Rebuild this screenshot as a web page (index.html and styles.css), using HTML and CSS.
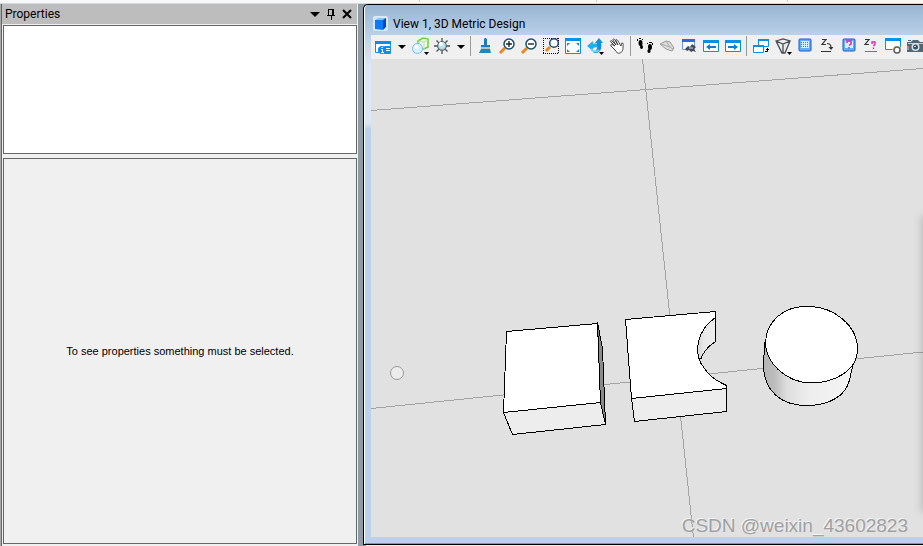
FILE: index.html
```html
<!DOCTYPE html>
<html lang="en">
<head>
<meta charset="utf-8">
<title>View 1, 3D Metric Design</title>
<link rel="stylesheet" href="styles.css">
</head>
<body>
<div class="ribbon"><i></i><i></i><i></i></div>
<main class="workspace">
  <aside class="panel">
    <header class="panel-head">
      <h2>Properties</h2>
      <button class="pin" aria-label="Menu"><svg width="16" height="16"><path d="M3 6h10l-5 5z"/></svg></button>
      <button class="pin" aria-label="Pin"><svg width="16" height="16" shape-rendering="crispEdges"><path d="M5 3h6v6h1v1H9v4H8v-4H4V9h1zM6 4v5h3V4z" fill-rule="evenodd"/></svg></button>
      <button class="pin" aria-label="Close"><svg width="16" height="16"><path d="M4 4l8 8M12 4l-8 8" stroke="#000" stroke-width="2"/></svg></button>
    </header>
    <div class="tree"></div>
    <div class="details"><p>To see properties something must be selected.</p></div>
  </aside>
  <section class="window">
    <header class="title">
      <svg width="16" height="16" viewBox="0 0 16 16"><rect width="15" height="15" rx="2" fill="#d9e8f6"/><path d="M2 4l3-2h8l-2 3H2z" fill="#7cc7ff"/><path d="M2 4h8v10l-8-1z" fill="#0a7cf5"/><path d="M10 4l3-2v9l-3 3z" fill="#0a43b8"/></svg>
      <h1>View 1, 3D Metric Design</h1>
    </header>
    <div class="client">
      <nav class="toolbar">
        <button aria-label="View attributes"><svg viewBox="0 0 16 16"><path d="M.5 14.500v-11h15V8M.5 14.500H4" fill="#fff" stroke="#0a8fe8"/><path d="M1 5h14v4H1z" fill="#fff"/><path d="M0 3h16v3H0z" fill="#0a8fe8"/><rect x="9" y="8" width="7" height="8" rx="1" fill="#0a8fe8"/><path d="M11 10.500h4M11 12.500h4" stroke="#fff"/><circle cx="7" cy="12" r="4" fill="#0a8fe8"/><path d="M6 11.500h1.500V14M6 14.500h3M6.500 9.500h1.500" stroke="#fff" fill="none"/></svg></button>
        <button class="drop" aria-label="View attributes menu"><svg viewBox="0 0 16 16"><path d="M4 7h8l-4 4z"/></svg></button>
        <button aria-label="Display style"><svg viewBox="0 0 16 16"><path d="M6 3l5-3 5 1v8l-4 2-6-1z" fill="#f2faec" stroke="#72cb46" stroke-width="1.500"/><path d="M6 3l6 1 4-2M12 4v7" fill="none" stroke="#b5e49c"/><circle cx="5.500" cy="10.500" r="5" fill="#d8f0ff" stroke="#76bfe9"/><circle cx="4" cy="9" r="2" fill="#fff"/><path d="M12 14h5l-2.500 3z"/></svg></button>
        <button aria-label="Brightness"><svg viewBox="0 0 16 16"><path d="M8 0v16M0 8h16M2.500 2.500l11 11M13.500 2.500l-11 11" stroke="#4e4e4e" stroke-width="1.300"/><circle cx="8" cy="8" r="4.500" fill="#8eaebb" stroke="#5d696e"/><circle cx="8" cy="7.500" r="3.500" fill="#b7e2f2"/><circle cx="7" cy="6" r="2" fill="#fff"/></svg></button>
        <button class="drop" aria-label="Brightness menu"><svg viewBox="0 0 16 16"><path d="M4 7h8l-4 4z"/></svg></button>
        <hr>
        <button aria-label="Update view"><svg viewBox="0 0 16 16"><path d="M7 1q1-2 3 0v6h3v2H4V7h3z" fill="#197dbb"/><path d="M4 9h9v2H4z" fill="#a5c5d8"/><path d="M4 11h9l1 4H2z" fill="#2586bf"/></svg></button>
        <button aria-label="Zoom in"><svg viewBox="0 0 16 16"><path d="M1 15l5-5" stroke="#e58a27" stroke-width="3"/><circle cx="10" cy="6" r="5" fill="#fff" stroke="#164e6f" stroke-width="1.500"/><path d="M7 6h6M10 3v6" stroke="#222" stroke-width="1.400"/></svg></button>
        <button aria-label="Zoom out"><svg viewBox="0 0 16 16"><path d="M1 15l5-5" stroke="#e58a27" stroke-width="3"/><circle cx="10" cy="6" r="5" fill="#fff" stroke="#164e6f" stroke-width="1.500"/><path d="M7 6h6" stroke="#222" stroke-width="1.400"/></svg></button>
        <button aria-label="Window area"><svg viewBox="0 0 16 16"><path d="M0 .5h16M0 15.500h16M.5 0v16M15.500 0v16" fill="none" stroke="#000" stroke-dasharray="1 1" shape-rendering="crispEdges"/><path d="M3 13l4-4" stroke="#e58a27" stroke-width="3"/><circle cx="11" cy="5" r="4.300" fill="#fff" stroke="#164e6f" stroke-width="1.500"/></svg></button>
        <button aria-label="Fit view"><svg viewBox="0 0 16 16"><path d="M.5.500h15v15H.5z" fill="#fff" stroke="#0a8fe8"/><path d="M0 0h16v3H0z" fill="#0a8fe8"/><path d="M2 5h3L2 8zM14 5h-3l3 3zM2 14v-3l3 3zM14 14v-3l-3 3z" fill="#1687d2"/></svg></button>
        <button aria-label="Rotate view"><svg viewBox="0 0 16 16"><path d="M0 8l6-5v3c3-1 5 0 7 1v4c-2-2-4-2-7-1v3z" fill="#2babed"/><path d="M8 5l4-5 4 5h-2c1 5 0 8-4 10H6c4-3 5-5 4-10z" fill="#158de0"/><path d="M4 11c2 3 5 3 8 1" fill="none" stroke="#76cff7" stroke-width="2"/><path d="M12 14h5l-2.500 3z"/></svg></button>
        <button aria-label="Pan view"><svg viewBox="0 0 16 16"><path d="M6 12L2 8c-1-2 1-2 2-1l2 1-4-4c-1-1 0-2 1-1l4 4-3-5c0-1 1-2 2 0l3 5-2-4c0-2 1-2 2 0l3 5c1-2 0-3 1-3 2 0 1 2 1 4 0 4-1 5-3 6-2 1-4-1-5-3z" fill="#fff" stroke="#333" stroke-width=".9"/></svg></button>
        <hr>
        <button aria-label="Walk"><svg viewBox="0 0 16 16"><ellipse cx="3.500" cy="5" rx="2" ry="3"/><ellipse cx="4.500" cy="9" rx="1.500" ry="2"/><path d="M0 1h1v2H0zM2 0h2v1H2zM5 1h1v1H5z"/><ellipse cx="13" cy="9" rx="2" ry="3"/><ellipse cx="12" cy="13" rx="1.600" ry="2"/><path d="M10 5h1v1h-1zM12 4h3v1h-3zM15 5h1v2h-1z"/></svg></button>
        <button aria-label="Fly"><svg viewBox="0 0 16 16"><path d="M1 6l6-3 4 1 4 6-2 3-6-2z" fill="#ddd" stroke="#999"/><path d="M2 6l9 3 3 2M7 3l4 6" fill="none" stroke="#aaa"/></svg></button>
        <button aria-label="Navigate view"><svg viewBox="0 0 16 16"><path d="M1.500 1.500h12v10h-12z" fill="#fff" stroke="#6a99df"/><path d="M1 1h13v3H1z" fill="#3265e5"/><path d="M4 11l3-3 2 1 2-3 4 3-2 2 2 3-3-1-2 1-2-2-2 1z" fill="#46495a"/><path d="M8 10h4" stroke="#dcdcdc"/></svg></button>
        <button aria-label="View previous"><svg viewBox="0 0 16 16"><path d="M.5 2.500h15v11H.5z" fill="#fff" stroke="#0a8fe8"/><path d="M0 2h16v3H0z" fill="#0a8fe8"/><path d="M3 9l4-3v2h6v2H7v2z" fill="#087fce"/></svg></button>
        <button aria-label="View next"><svg viewBox="0 0 16 16"><path d="M.5 2.500h15v11H.5z" fill="#fff" stroke="#0a8fe8"/><path d="M0 2h16v3H0z" fill="#0a8fe8"/><path d="M13 9L9 6v2H3v2h6v2z" fill="#087fce"/></svg></button>
        <hr>
        <button aria-label="Copy view"><svg viewBox="0 0 16 16"><path d="M5.500 1.500h10v7h-10z" fill="#fff" stroke="#0a8fe8"/><path d="M5 1h11v2H5z" fill="#0a8fe8"/><path d="M.5 7.500h10v7H.5z" fill="#fff" stroke="#0a8fe8"/><path d="M0 7h11v2H0z" fill="#0a8fe8"/><path d="M12 13.500h2.500V10M13 11.500h3" fill="none" stroke="#000"/></svg></button>
        <button aria-label="Perspective"><svg viewBox="0 0 16 16"><path d="M1 3l7-2 7 2-5 12H7zM1 3l7 3 7-3M8 6v9" fill="#ececec" stroke="#454d53" stroke-width="1.300"/><path d="M12 14h5l-2.500 3z"/></svg></button>
        <button aria-label="Clip volume"><svg viewBox="0 0 16 16"><rect x="2" y="1" width="12" height="12" rx="1" fill="#5eb0fc" stroke="#2359ca"/><path d="M4 3h8v7H4z" fill="#d6efff"/><path d="M4 4.500h8M4 6.500h8M4 8.500h8" stroke="#3b78d8" stroke-dasharray="1 1"/></svg></button>
        <button aria-label="Set display depth"><svg viewBox="0 0 16 16"><path d="M3 1.500h4L3 6.500h4M8 5.500q4 0 4 4" fill="none" stroke="#333" stroke-width="1.200"/><path d="M9.500 9h5L12 12zM2 13h10v1H2z" fill="#333"/></svg></button>
        <button aria-label="Show display depth"><svg viewBox="0 0 16 16"><rect x="2" y="1" width="12" height="12" rx="1" fill="#5eb0fc" stroke="#2359ca"/><path d="M4 3h8v7H4z" fill="#d6efff"/><path d="M6 5V3h4v3L8 7.500M8 9v1.500" fill="none" stroke="#d629b5" stroke-width="1.500"/></svg></button>
        <button aria-label="Show active depth"><svg viewBox="0 0 16 16"><path d="M2 1.500h4L2 6.500h4" fill="none" stroke="#333" stroke-width="1.200"/><path d="M9 6V4h3v2l-1.500 2M10.500 9.500v1.500" fill="none" stroke="#d629b5" stroke-width="1.400"/><path d="M2 13h12v1H2z" fill="#777"/></svg></button>
        <button aria-label="View settings"><svg viewBox="0 0 16 16"><path d="M.5.500h15v11H.5z" fill="#fff" stroke="#0a8fe8"/><path d="M0 0h16v3H0z" fill="#0a8fe8"/><circle cx="12" cy="12" r="4.500" fill="#f0f0f0"/><circle cx="12" cy="12" r="3" fill="#fff" stroke="#555e64" stroke-width="1.500"/></svg></button>
        <button aria-label="Camera"><svg viewBox="0 0 16 16"><path d="M0 4h4l2-2h5l2 2h4v10H0z" fill="#536675"/><path d="M1 5.500h15M1 8v4" stroke="#c2cbd0"/><circle cx="8.500" cy="9" r="4" fill="#dbe3e8"/><circle cx="8.500" cy="9" r="2.500" fill="#395065"/><path d="M7 8h2v1H7z" fill="#b9d4e5"/><path d="M1 2h3v1H1z" fill="#536675"/></svg></button>
      </nav>
      <div class="viewport">
        <svg class="scene" viewBox="371 59 552 479" preserveAspectRatio="xMinYMin slice" role="img" aria-label="Three solids on a grid">
          <defs>
            <linearGradient id="side"><stop offset="0" stop-color="#b5b5b5"/><stop offset=".12" stop-color="#bcbcbc"/><stop offset=".25" stop-color="#dedede"/><stop offset=".5" stop-color="#eee"/><stop offset="1" stop-color="#f4f4f4"/></linearGradient>
            <linearGradient id="notch"><stop offset="0" stop-color="#d5d5d5"/><stop offset=".3" stop-color="#e8e8e8"/><stop offset="1" stop-color="#eee"/></linearGradient>
            <filter id="soft" x="-2" y="-.1" width="5" height="1.2"><feGaussianBlur stdDeviation="4"/></filter>
          </defs>
          <g shape-rendering="crispEdges" stroke-linejoin="round">
            <path class="grid" d="M371 110.500L923 68.500M371 408.500L923 352M642.500 59L693.500 538"/>
            <g class="solid">
              <path fill="#fff" d="M506.500 331.500L597.500 323.500 600.500 402.500 503.500 412.500z"/>
              <path fill="#ededed" d="M503.500 412.500L600.500 402.500 605.500 424.500 512.500 434.500z"/>
              <path fill="#8a8a8a" d="M597.500 322.500L602.500 348.500 605.500 424.500 600.500 402.500z"/>
              <path fill="url(#notch)" stroke="none" d="M715.500 317.500V341.500Q705 348 700.500 359.500Q693 336 715.500 317.500z"/>
              <path fill="#fff" d="M625.500 319.500L715.500 311.500V317.500C697 330 692 354 704.500 368.500C710 377 717 381 726.500 385.500V388.500L631.500 398.500z"/>
              <path fill="none" d="M715.500 311.500V341.500Q705 348 700.500 359.500"/>
              <path fill="#ededed" d="M631.500 398.500L726.500 388.500V411.500L634.500 421.500z"/>
              <path fill="url(#side)" d="M764.500 343L763.500 368C765 392 782 405.500 806.500 405.500C829 405.500 846 396 849.500 380L856.500 349z"/>
              <path fill="#fff" d="M807.500 306.500C834 306 857.500 326 857.500 349C857.500 371 834 383 810.500 383C784 382 765.500 361 765.500 343C766 321 784 306 807.500 306.500z"/>
            </g>
          </g>
          <circle cx="397" cy="373" r="6.500" fill="#ececec" stroke="#999"/>
          <path d="M922 216h8v296h-8z" fill="#000" fill-opacity=".2" filter="url(#soft)"/>
        </svg>
        <span class="credit">CSDN @weixin_43602823</span>
      </div>
    </div>
  </section>
</main>
</body>
</html>
```
FILE: styles.css
```css
* { box-sizing: border-box; }
body {
  margin: 0;
  height: 100vh;
  display: flex;
  flex-direction: column;
  overflow: hidden;
  background: #f0f0f0;
  color: #000;
  font: 11px "Liberation Sans", sans-serif;
}
h1, h2, p { margin: 0; font-weight: 400; }
button { border: 0; padding: 0; background: none; color: inherit; font: inherit; }
svg { display: block; }
.ribbon {
  height: 4px;
  flex: none;
  overflow: hidden;
  display: grid;
  grid-template-columns: 420px 177px 191px;
  background: #f8f8f8;
  border-bottom: 1px solid #d5d8dc;
}
.ribbon i { height: 2px; border-right: 1px solid #ccc; }
.workspace {
  flex: 1;
  min-height: 0;
  display: flex;
  background: linear-gradient(#8f9ba5, #8f9ba5) 358px 0 / 8px 100% no-repeat;
}
.panel {
  width: 358px;
  flex: none;
  display: flex;
  flex-direction: column;
  padding: 0 1px 2px;
  border-left: 1px solid #aaa;
  box-shadow: inset 1px 0 #1979be;
}
.panel-head {
  height: 20px;
  flex: none;
  display: flex;
  align-items: center;
  margin-bottom: 1px;
  padding: 0 2px 0 3px;
  background: #bdbdbd;
}
.panel-head h2 {
  flex: 1;
  font: 12px/20px Roboto, sans-serif;
}
.tree { height: 129px; flex: none; margin: 0 0 4px 1px; background: #fff; border: 1px solid #666; }
.details {
  flex: 1;
  margin-left: 1px;
  border: 1px solid #666;
  display: grid;
  place-items: center;
}
.window {
  flex: 1;
  min-width: 0;
  display: flex;
  flex-direction: column;
  margin-left: 5px;
  margin-bottom: 1px;
  padding: 0 0 7px 7px;
  border: 1px solid #000;
  border-right: 0;
  border-top-left-radius: 5px;
  background: linear-gradient(#99b4d1, #b9d1ea 30px, #dbe7f6 60px, #dbe7f6 118px, #b9d1ea 124px);
  box-shadow: inset 1px 0 #fff, inset 0 -1px #31b8d5;
}
.title { height: 30px; flex: none; display: flex; align-items: center; gap: 4px; padding: 7px 0 0 2px; }
.title h1 { font: 12px/20px Roboto, sans-serif; }
.client { flex: 1; min-height: 0; display: flex; flex-direction: column; }
.toolbar {
  height: 24px;
  flex: none;
  display: flex;
  overflow: hidden;
  padding-left: 1px;
  background: #f0f0f0;
}
.toolbar button { width: 22px; height: 22px; flex: none; display: grid; place-items: center; }
.toolbar .drop { width: 15px; }
.toolbar svg { width: 16px; height: 16px; overflow: visible; }
.toolbar hr { width: 1px; height: 20px; flex: none; margin: 1px 3px 0 2px; border: 0; background: #999; }
.viewport { flex: 1; min-height: 0; position: relative; overflow: hidden; background: #e1e1e1; }
.scene { width: 100%; height: 100%; }
.grid { stroke: #a3a3a3; fill: none; }
.solid { stroke: #000; }
.credit {
  position: absolute;
  right: 15px;
  bottom: 0;
  font-size: 19px;
  line-height: 22px;
  color: #a0a0a0;
  text-shadow: -1px -1px #f5f5f5;
}
```
